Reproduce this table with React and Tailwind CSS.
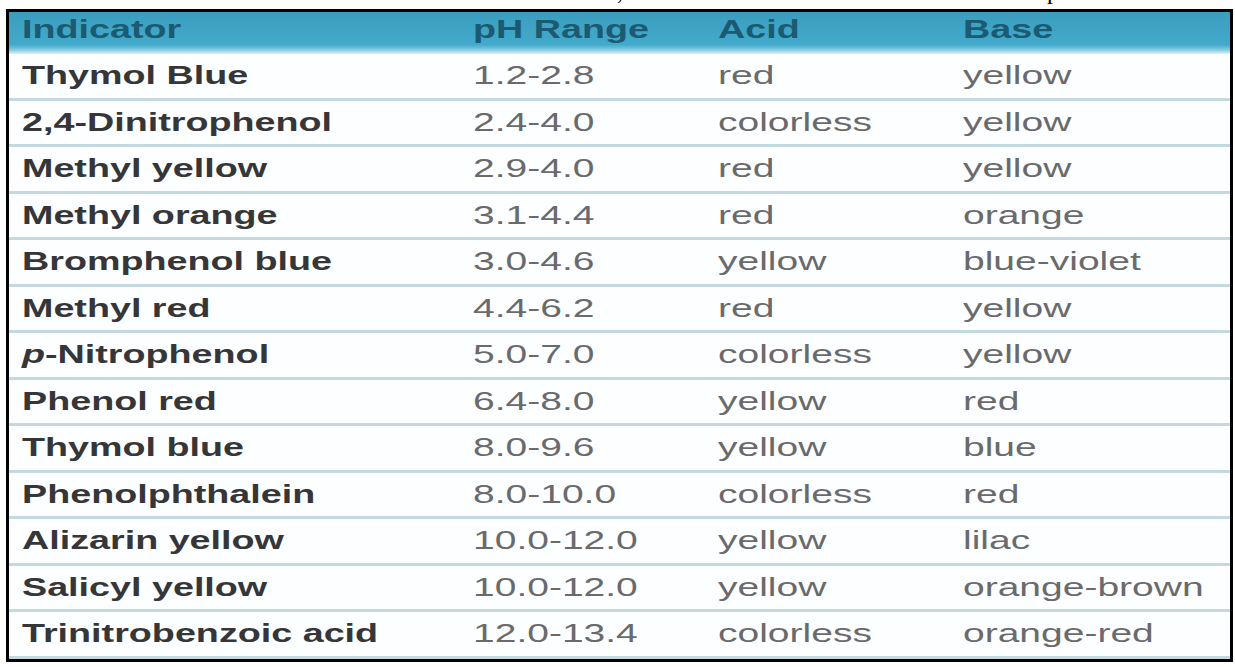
const rows = [
  { name: "Thymol Blue", range: "1.2-2.8", acid: "red", base: "yellow" },
  { name: "2,4-Dinitrophenol", range: "2.4-4.0", acid: "colorless", base: "yellow" },
  { name: "Methyl yellow", range: "2.9-4.0", acid: "red", base: "yellow" },
  { name: "Methyl orange", range: "3.1-4.4", acid: "red", base: "orange" },
  { name: "Bromphenol blue", range: "3.0-4.6", acid: "yellow", base: "blue-violet" },
  { name: "Methyl red", range: "4.4-6.2", acid: "red", base: "yellow" },
  { name: "-Nitrophenol", italic: "p", range: "5.0-7.0", acid: "colorless", base: "yellow" },
  { name: "Phenol red", range: "6.4-8.0", acid: "yellow", base: "red" },
  { name: "Thymol blue", range: "8.0-9.6", acid: "yellow", base: "blue" },
  { name: "Phenolphthalein", range: "8.0-10.0", acid: "colorless", base: "red" },
  { name: "Alizarin yellow", range: "10.0-12.0", acid: "yellow", base: "lilac" },
  { name: "Salicyl yellow", range: "10.0-12.0", acid: "yellow", base: "orange-brown" },
  { name: "Trinitrobenzoic acid", range: "12.0-13.4", acid: "colorless", base: "orange-red" },
];

const Bold = ({ children }) => (
  <span className="inline-block origin-left scale-x-[1.45] whitespace-nowrap font-bold">{children}</span>
);

const Plain = ({ children }) => (
  <span className="inline-block origin-left scale-x-[1.5] whitespace-nowrap">{children}</span>
);

const App = () => {
  return (
    <div className="w-[1235px] h-[667px] bg-white overflow-hidden font-['Liberation_Sans',Arial,sans-serif]">
      {/* tail of the line above, only descenders show */}
      <div className="h-[9px] overflow-hidden">
        <div className="-mt-[21px] flex text-[24px] leading-none text-black font-['Liberation_Serif',serif]">
          <span className="ml-[617px]">,</span>
          <span className="ml-[424px]">p</span>
        </div>
      </div>

      <div className="ml-[6px] w-[1227px] border-[3px] border-black">
        <div className="grid grid-cols-[451px_245px_245px_1fr] h-[42px] items-center pl-[13px] text-[26px] text-[#1b5a70] bg-[linear-gradient(to_bottom,#3a9dbe_0%,#43aacc_78%,#82cbe0_90%,#dff3f7_100%)]">
          <div className="-mt-[7px]"><Bold>Indicator</Bold></div>
          <div className="-mt-[7px]"><Bold>pH Range</Bold></div>
          <div className="-mt-[7px]"><Bold>Acid</Bold></div>
          <div className="-mt-[7px]"><Bold>Base</Bold></div>
        </div>

        {rows.map((r) => (
          <div
            key={r.name + r.range}
            className="grid grid-cols-[451px_245px_245px_1fr] h-[46.5px] items-center pl-[13px] text-[26px] bg-[#fcfeff] border-b-[3px] border-[#c3d9df]"
          >
            <div className="text-[#363638]">
              <Bold>
                {r.italic && <i>{r.italic}</i>}
                {r.name}
              </Bold>
            </div>
            <div className="text-[#6a6a6c]"><Plain>{r.range}</Plain></div>
            <div className="text-[#6a6a6c]"><Plain>{r.acid}</Plain></div>
            <div className="text-[#6a6a6c]"><Plain>{r.base}</Plain></div>
          </div>
        ))}
      </div>
    </div>
  );
};

export default App;
